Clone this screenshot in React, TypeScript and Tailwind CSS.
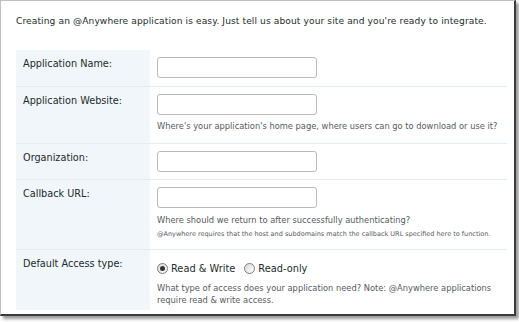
import React from 'react';

const font = { fontFamily: '"DejaVu Sans", Verdana, sans-serif' };

const TextBox: React.FC = () => (
  <div className="w-[160px] h-[21px] rounded-[3px] border border-[#b9b9b9] bg-white" />
);

const Help: React.FC<{ children: React.ReactNode; className?: string }> = ({ children, className }) => (
  <div className={`text-[8.3px] leading-[12px] text-[#555b5b] ${className || ''}`}>{children}</div>
);

const Radio: React.FC<{ checked?: boolean; label: string }> = ({ checked, label }) => (
  <label className="flex items-center gap-[3px]">
    <span className="w-[11px] h-[11px] rounded-full border border-[#7c7c7c] bg-gradient-to-br from-[#d9d9d9] to-white flex items-center justify-center">
      {checked && <span className="w-[5px] h-[5px] rounded-full bg-[#333]" />}
    </span>
    <span className="text-[9.8px] text-[#1b2c2c] pt-[2px]">{label}</span>
  </label>
);

const Row: React.FC<{ label: string; h: string; first?: boolean; children: React.ReactNode }> = ({ label, h, first, children }) => (
  <div className={`flex ${h} ${first ? '' : 'border-t border-[#e3edf5]'}`}>
    <div className="w-[134px] shrink-0 bg-[#f0f6fa] pl-[7px] pt-[8px] text-[9.7px] leading-[12px] text-[#1b2c2c]">
      {label}
    </div>
    <div className="flex-1 pl-[7px] pt-[7px]">{children}</div>
  </div>
);

export default function App() {
  return (
    <div className="w-[519px] h-[322px] bg-white" style={font}>
      <div className="w-[516px] h-[316px] border-l border-t border-[#bfbfbf] border-r-2 border-b-2 border-r-[#3c3c3c] border-b-[#3c3c3c] shadow-[3px_3px_3px_rgba(0,0,0,0.4)] bg-white pl-[15px] pt-[14px]">
        <p className="text-[9.1px] leading-[12px] text-[#1b2c2c] tracking-[0.1px]">
          Creating an @Anywhere application is easy. Just tell us about your site and you're ready to integrate.
        </p>
        <div className="mt-[23px] w-[491px]">
          <Row label="Application Name:" h="h-[36px]" first>
            <TextBox />
          </Row>
          <Row label="Application Website:" h="h-[57px]">
            <TextBox />
            <Help className="mt-[5px]">Where's your application's home page, where users can go to download or use it?</Help>
          </Row>
          <Row label="Organization:" h="h-[36px]">
            <TextBox />
          </Row>
          <Row label="Callback URL:" h="h-[70px]">
            <TextBox />
            <Help className="mt-[6px]">Where should we return to after successfully authenticating?</Help>
            <div className="text-[6.5px] leading-[10px] mt-[3px] text-[#555b5b]">
              @Anywhere requires that the host and subdomains match the callback URL specified here to function.
            </div>
          </Row>
          <Row label="Default Access type:" h="h-[61px]">
            <div className="flex items-center gap-[9px] mt-[3px]">
              <Radio checked label="Read & Write" />
              <Radio label="Read-only" />
            </div>
            <Help className="mt-[5px]">
              What type of access does your application need? Note: @Anywhere applications<br />require read &amp; write access.
            </Help>
          </Row>
        </div>
      </div>
    </div>
  );
}
